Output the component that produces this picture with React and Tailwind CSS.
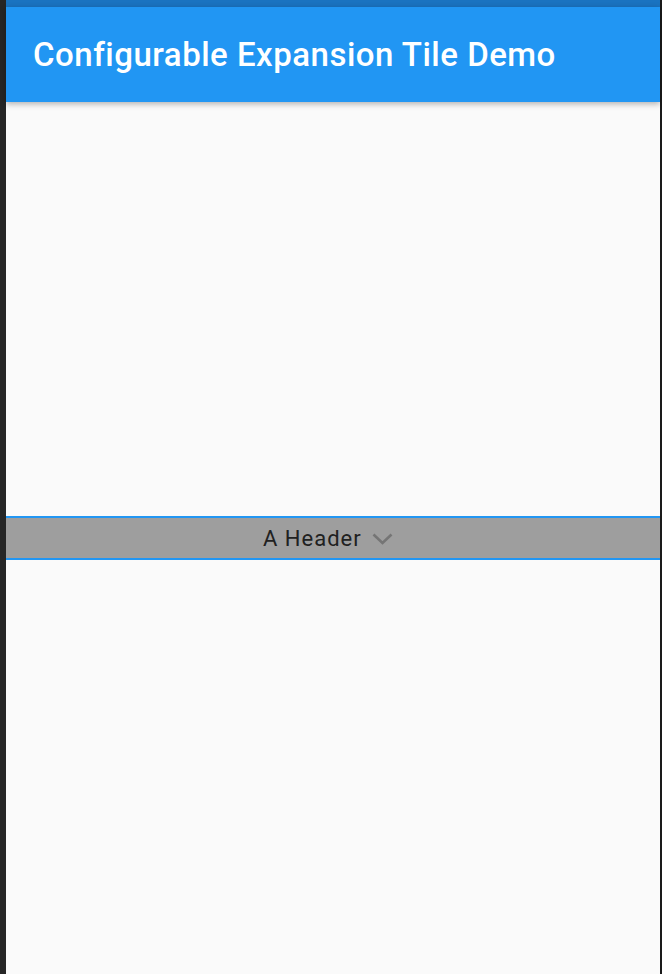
export default function App() {
  return (
    <div className="flex h-[974px] w-[662px] bg-[#262626]" style={{ fontFamily: "Roboto, 'Noto Sans', sans-serif" }}>
      <div className="w-[6px] shrink-0 bg-[#262626]" />
      <div className="flex flex-1 flex-col bg-[#fafafa]">
        <div className="h-[7px] bg-[#1a73c0]" />
        <div className="relative z-10 flex h-[95px] items-center bg-[#2196f3] pl-[27px] shadow-[0_2px_6px_rgba(0,0,0,0.3)]">
          <span className="mt-[1px] text-[33px] font-medium tracking-[0.5px] text-white">Configurable Expansion Tile Demo</span>
        </div>
        <div className="h-[414px]" />
        <div className="flex h-[44px] items-center border-y-2 border-[#2196f3] bg-[#9e9e9e] pl-[257px]">
          <span className="text-[22px] tracking-[1px] text-[#212121]">A Header</span>
          <svg width="21" height="12" viewBox="0 0 21 12" className="ml-[10px] mt-[1px]">
            <path d="M1.5 1.5 10.5 10 19.5 1.5" fill="none" stroke="#757575" strokeWidth="2.6" />
          </svg>
        </div>
        <div className="flex-1" />
      </div>
      <div className="w-[2px] shrink-0 bg-[#1a1a1a]" />
    </div>
  );
}
